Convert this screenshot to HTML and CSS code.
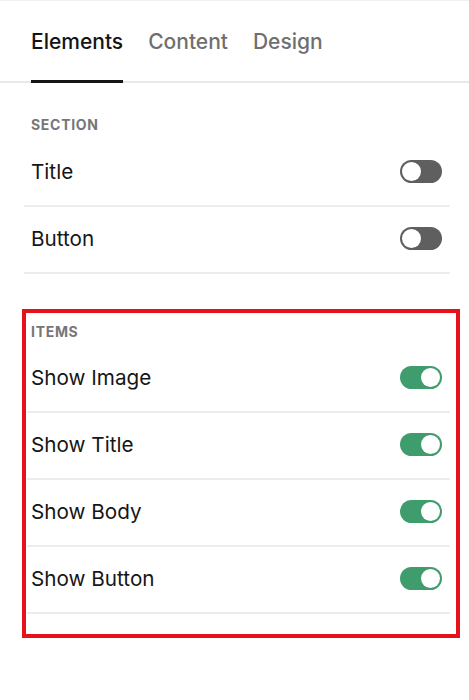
FILE: index.html
```html
<!DOCTYPE html>
<html lang="en">
<head>
<meta charset="utf-8">
<title>Elements</title>
<link rel="stylesheet" href="styles.css">
</head>
<body>
  <div class="panel">
    <nav class="tabs">
      <span class="tab tab--active">Elements</span>
      <span class="tab">Content</span>
      <span class="tab">Design</span>
    </nav>

    <div class="body">
      <section class="group">
        <div class="group-label">Section</div>
        <div class="row">
          <span class="row-label">Title</span>
          <span class="switch"><span class="knob"></span></span>
        </div>
        <div class="row">
          <span class="row-label">Button</span>
          <span class="switch"><span class="knob"></span></span>
        </div>
      </section>

      <section class="group group--marked">
        <div class="group-label">Items</div>
        <div class="row">
          <span class="row-label">Show Image</span>
          <span class="switch switch--on"><span class="knob"></span></span>
        </div>
        <div class="row">
          <span class="row-label">Show Title</span>
          <span class="switch switch--on"><span class="knob"></span></span>
        </div>
        <div class="row">
          <span class="row-label">Show Body</span>
          <span class="switch switch--on"><span class="knob"></span></span>
        </div>
        <div class="row">
          <span class="row-label">Show Button</span>
          <span class="switch switch--on"><span class="knob"></span></span>
        </div>
      </section>
    </div>
  </div>
</body>
</html>
```

FILE: styles.css
```css
* {
  box-sizing: border-box;
}

html,
body {
  margin: 0;
  padding: 0;
  background: #ffffff;
}

body {
  font-family: Inter, "Noto Sans", "Liberation Sans", sans-serif;
  color: #1b1b1b;
  width: 469px;
  height: 700px;
  overflow: hidden;
}

/* tab strip */
.tabs {
  display: flex;
  gap: 25px;
  padding-left: 31px;
  border-top: 1px solid #f0f0f0;
  border-bottom: 2px solid #e8e8e8;
}

.tab {
  font-size: 21px;
  font-weight: 500;
  line-height: 25px;
  color: #6f6f6f;
  padding-top: 28px;
  padding-bottom: 26px;
  border-bottom: 3px solid transparent;
  margin-bottom: -2px;
}

.tab--active {
  color: #141414;
  border-bottom-color: #151515;
}

/* settings list */
.body {
  padding: 34px 19px 0 24px;
  display: flex;
  flex-direction: column;
  gap: 35px;
}

.group {
  display: flex;
  flex-direction: column;
}

.group--marked {
  margin: 0 -10px 0 -2px;
  padding: 11px 6px 20px 1px;
  border: 4px solid #e5121b;
}

.group-label {
  font-size: 14px;
  line-height: 16px;
  font-weight: 700;
  letter-spacing: 0.7px;
  text-transform: uppercase;
  color: #767676;
  padding-left: 7px;
  margin-bottom: 7px;
}

.group--marked .group-label {
  padding-left: 4px;
  margin-bottom: 6px;
}

.row {
  height: 67px;
  display: flex;
  align-items: center;
  justify-content: space-between;
  padding: 0 8px 0 7px;
  border-bottom: 2px solid #ececec;
}

.group--marked .row {
  padding-left: 4px;
}

.row-label {
  font-size: 20.7px;
  line-height: 24px;
  color: #161616;
  margin-top: -1px;
}

/* toggle switch */
.switch {
  position: relative;
  width: 42px;
  height: 23px;
  border-radius: 12px;
  background: #5f5f5f;
  margin-top: -3px;
}

.switch .knob {
  position: absolute;
  top: 2px;
  left: 2px;
  width: 19px;
  height: 19px;
  border-radius: 50%;
  background: #ffffff;
}

.switch--on {
  background: #3f9c6d;
}

.switch--on .knob {
  left: auto;
  right: 2px;
}
```
